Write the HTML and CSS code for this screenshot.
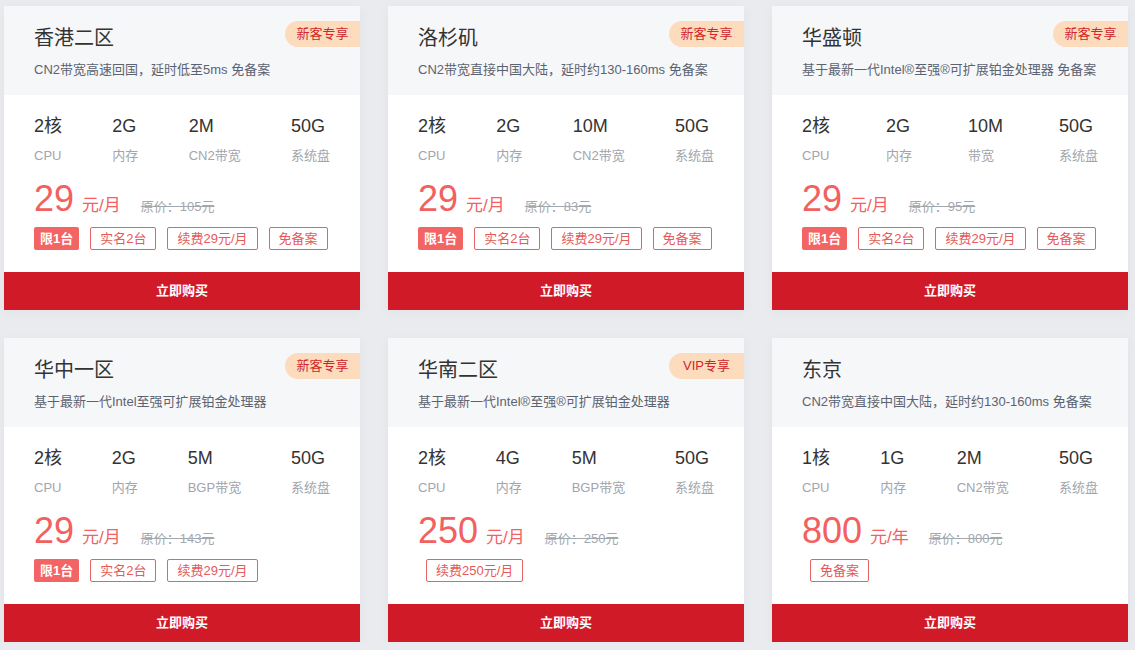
FILE: index.html
```html
<!DOCTYPE html>
<html lang="zh-CN">
<head>
<meta charset="utf-8">
<title>产品列表</title>
<link rel="stylesheet" href="styles.css">
</head>
<body>
<div class="grid">

  <div class="card">
    <div class="head">
      <div class="title">香港二区</div>
      <div class="desc">CN2带宽高速回国，延时低至5ms 免备案</div>
      <span class="badge">新客专享</span>
    </div>
    <div class="body">
      <div class="specs">
        <div class="spec"><div class="v">2核</div><div class="l">CPU</div></div>
        <div class="spec"><div class="v">2G</div><div class="l">内存</div></div>
        <div class="spec"><div class="v">2M</div><div class="l">CN2带宽</div></div>
        <div class="spec"><div class="v">50G</div><div class="l">系统盘</div></div>
      </div>
      <div class="price"><span class="num">29</span><span class="unit">元/月</span><span class="orig">原价：105元</span></div>
      <div class="tags"><span class="tag-f">限1台</span><span class="tag-o">实名2台</span><span class="tag-o">续费29元/月</span><span class="tag-o">免备案</span></div>
    </div>
    <div class="buy">立即购买</div>
  </div>

  <div class="card">
    <div class="head">
      <div class="title">洛杉矶</div>
      <div class="desc">CN2带宽直接中国大陆，延时约130-160ms 免备案</div>
      <span class="badge">新客专享</span>
    </div>
    <div class="body">
      <div class="specs">
        <div class="spec"><div class="v">2核</div><div class="l">CPU</div></div>
        <div class="spec"><div class="v">2G</div><div class="l">内存</div></div>
        <div class="spec"><div class="v">10M</div><div class="l">CN2带宽</div></div>
        <div class="spec"><div class="v">50G</div><div class="l">系统盘</div></div>
      </div>
      <div class="price"><span class="num">29</span><span class="unit">元/月</span><span class="orig">原价：83元</span></div>
      <div class="tags"><span class="tag-f">限1台</span><span class="tag-o">实名2台</span><span class="tag-o">续费29元/月</span><span class="tag-o">免备案</span></div>
    </div>
    <div class="buy">立即购买</div>
  </div>

  <div class="card">
    <div class="head">
      <div class="title">华盛顿</div>
      <div class="desc">基于最新一代Intel®至强®可扩展铂金处理器 免备案</div>
      <span class="badge">新客专享</span>
    </div>
    <div class="body">
      <div class="specs">
        <div class="spec"><div class="v">2核</div><div class="l">CPU</div></div>
        <div class="spec"><div class="v">2G</div><div class="l">内存</div></div>
        <div class="spec"><div class="v">10M</div><div class="l">带宽</div></div>
        <div class="spec"><div class="v">50G</div><div class="l">系统盘</div></div>
      </div>
      <div class="price"><span class="num">29</span><span class="unit">元/月</span><span class="orig">原价：95元</span></div>
      <div class="tags"><span class="tag-f">限1台</span><span class="tag-o">实名2台</span><span class="tag-o">续费29元/月</span><span class="tag-o">免备案</span></div>
    </div>
    <div class="buy">立即购买</div>
  </div>

  <div class="card">
    <div class="head">
      <div class="title">华中一区</div>
      <div class="desc">基于最新一代Intel至强可扩展铂金处理器</div>
      <span class="badge">新客专享</span>
    </div>
    <div class="body">
      <div class="specs">
        <div class="spec"><div class="v">2核</div><div class="l">CPU</div></div>
        <div class="spec"><div class="v">2G</div><div class="l">内存</div></div>
        <div class="spec"><div class="v">5M</div><div class="l">BGP带宽</div></div>
        <div class="spec"><div class="v">50G</div><div class="l">系统盘</div></div>
      </div>
      <div class="price"><span class="num">29</span><span class="unit">元/月</span><span class="orig">原价：143元</span></div>
      <div class="tags"><span class="tag-f">限1台</span><span class="tag-o">实名2台</span><span class="tag-o">续费29元/月</span></div>
    </div>
    <div class="buy">立即购买</div>
  </div>

  <div class="card">
    <div class="head">
      <div class="title">华南二区</div>
      <div class="desc">基于最新一代Intel®至强®可扩展铂金处理器</div>
      <span class="badge">VIP专享</span>
    </div>
    <div class="body">
      <div class="specs">
        <div class="spec"><div class="v">2核</div><div class="l">CPU</div></div>
        <div class="spec"><div class="v">4G</div><div class="l">内存</div></div>
        <div class="spec"><div class="v">5M</div><div class="l">BGP带宽</div></div>
        <div class="spec"><div class="v">50G</div><div class="l">系统盘</div></div>
      </div>
      <div class="price"><span class="num">250</span><span class="unit">元/月</span><span class="orig">原价：250元</span></div>
      <div class="tags"><span class="tag-o">续费250元/月</span></div>
    </div>
    <div class="buy">立即购买</div>
  </div>

  <div class="card">
    <div class="head">
      <div class="title">东京</div>
      <div class="desc">CN2带宽直接中国大陆，延时约130-160ms 免备案</div>
    </div>
    <div class="body">
      <div class="specs">
        <div class="spec"><div class="v">1核</div><div class="l">CPU</div></div>
        <div class="spec"><div class="v">1G</div><div class="l">内存</div></div>
        <div class="spec"><div class="v">2M</div><div class="l">CN2带宽</div></div>
        <div class="spec"><div class="v">50G</div><div class="l">系统盘</div></div>
      </div>
      <div class="price"><span class="num">800</span><span class="unit">元/年</span><span class="orig">原价：800元</span></div>
      <div class="tags"><span class="tag-o">免备案</span></div>
    </div>
    <div class="buy">立即购买</div>
  </div>

</div>
</body>
</html>
```

FILE: styles.css
```css
* { box-sizing: border-box; }

body {
  margin: 0;
  background: #e9ebef;
  font-family: "Liberation Sans", "Noto Sans CJK SC", sans-serif;
  color: #333;
}

.grid {
  display: grid;
  grid-template-columns: repeat(3, 356px);
  column-gap: 28px;
  row-gap: 28px;
  padding: 6px 0 0 4px;
}

.card {
  position: relative;
  height: 304px;
  background: #fff;
  display: flex;
  flex-direction: column;
  box-shadow: 0 2px 12px rgba(0, 0, 0, 0.04);
}

.head {
  position: relative;
  height: 89px;
  background: #f6f7f9;
  padding: 18px 30px 0 30px;
}

.title {
  font-size: 20px;
  line-height: 28px;
  color: #333;
}

.desc {
  margin-top: 8px;
  font-size: 13px;
  line-height: 20px;
  color: #5c6370;
  white-space: nowrap;
}

.badge {
  position: absolute;
  top: 15px;
  right: 0;
  width: 75px;
  height: 26px;
  line-height: 26px;
  text-align: center;
  font-size: 13px;
  color: #d0262c;
  background: #fcdcbd;
  border-radius: 13px 0 0 13px;
}

.body {
  padding: 19px 30px 0 30px;
}

.specs {
  display: flex;
  justify-content: space-between;
}

.spec .v {
  font-size: 18px;
  line-height: 24px;
  color: #333;
}

.spec .l {
  margin-top: 8px;
  font-size: 13px;
  line-height: 20px;
  color: #a1a5ad;
}

.price {
  margin-top: 13px;
  display: flex;
  align-items: baseline;
  height: 40px;
  line-height: 40px;
  color: #f2605f;
}

.price .num {
  font-size: 36px;
}

.price .unit {
  font-size: 17px;
  margin-left: 8px;
}

.price .orig {
  margin-left: 20px;
  font-size: 13px;
  color: #a3a7ae;
  text-decoration: line-through;
}

.tags {
  margin-top: 8px;
  display: flex;
  gap: 3px;
}

.tag-f {
  height: 23px;
  line-height: 23px;
  padding: 0 6px;
  font-size: 13px;
  font-weight: bold;
  color: #fff;
  background: #f36464;
  border-radius: 2px;
}

.tag-o {
  margin-left: 8px;
  height: 23px;
  line-height: 21px;
  padding: 0 9px;
  font-size: 13px;
  color: #e65a5a;
  border: 1px solid #e46464;
  border-radius: 2px;
}

.buy {
  margin-top: auto;
  height: 38px;
  line-height: 38px;
  text-align: center;
  font-size: 13px;
  font-weight: bold;
  color: #fff;
  background: #d11a27;
}
```
